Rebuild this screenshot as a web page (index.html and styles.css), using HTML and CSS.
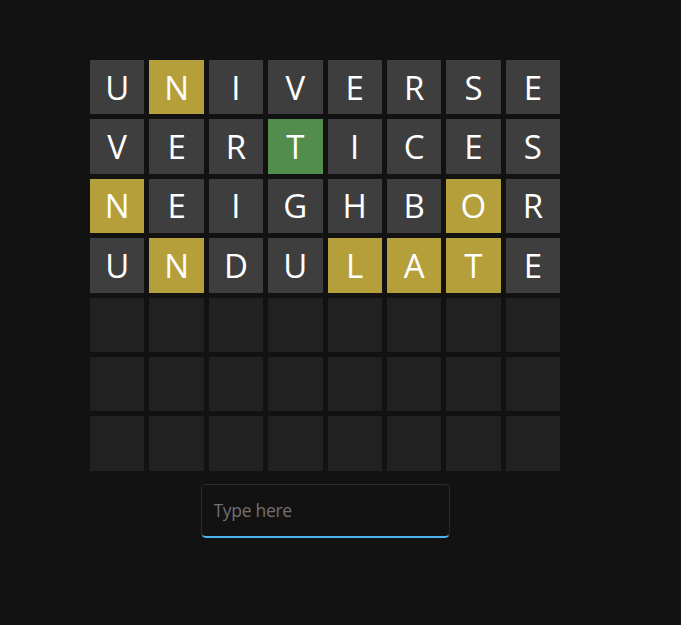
FILE: index.html
```html
<!DOCTYPE html>
<html>
<head>
<meta charset="utf-8">
<link rel="stylesheet" href="styles.css">
</head>
<body>
<main class="app">
  <div class="board">
    <div class="cell used">U</div><div class="cell present">N</div><div class="cell used">I</div><div class="cell used">V</div><div class="cell used">E</div><div class="cell used">R</div><div class="cell used">S</div><div class="cell used">E</div>
    <div class="cell used">V</div><div class="cell used">E</div><div class="cell used">R</div><div class="cell correct">T</div><div class="cell used">I</div><div class="cell used">C</div><div class="cell used">E</div><div class="cell used">S</div>
    <div class="cell present">N</div><div class="cell used">E</div><div class="cell used">I</div><div class="cell used">G</div><div class="cell used">H</div><div class="cell used">B</div><div class="cell present">O</div><div class="cell used">R</div>
    <div class="cell used">U</div><div class="cell present">N</div><div class="cell used">D</div><div class="cell used">U</div><div class="cell present">L</div><div class="cell present">A</div><div class="cell present">T</div><div class="cell used">E</div>
    <div class="cell"></div><div class="cell"></div><div class="cell"></div><div class="cell"></div><div class="cell"></div><div class="cell"></div><div class="cell"></div><div class="cell"></div>
    <div class="cell"></div><div class="cell"></div><div class="cell"></div><div class="cell"></div><div class="cell"></div><div class="cell"></div><div class="cell"></div><div class="cell"></div>
    <div class="cell"></div><div class="cell"></div><div class="cell"></div><div class="cell"></div><div class="cell"></div><div class="cell"></div><div class="cell"></div><div class="cell"></div>
  </div>
  <input class="guess" type="text" placeholder="Type here">
</main>
</body>
</html>
```
FILE: styles.css
```css
html, body {
  margin: 0;
  padding: 0;
  background: #121212;
  height: 100%;
}
.app {
  width: 650px;
  display: flex;
  flex-direction: column;
  align-items: center;
  padding-top: 60px;
  font-family: "Open Sans", sans-serif;
}
.board {
  display: grid;
  grid-template-columns: repeat(8, 54.375px);
  grid-auto-rows: 54.375px;
  gap: 5px;
}
.cell {
  background: #212121;
  color: #ffffff;
  display: flex;
  align-items: center;
  justify-content: center;
  font-size: 33px;
  line-height: 1;
}
.cell.used { background: #3e3e3e; }
.cell.present { background: #b59f3b; }
.cell.correct { background: #538d4e; }
.guess {
  margin-top: 13px;
  width: 249px;
  height: 54px;
  box-sizing: border-box;
  background: #121212;
  border: 1px solid #2c2c2c;
  border-bottom: 2px solid #4cb4f0;
  border-radius: 5px;
  padding: 0 12px;
  font-family: "Open Sans", sans-serif;
  font-size: 17.5px;
  letter-spacing: -0.3px;
  color: #dddddd;
  outline: none;
}
.guess::placeholder { color: #717171; }
```
